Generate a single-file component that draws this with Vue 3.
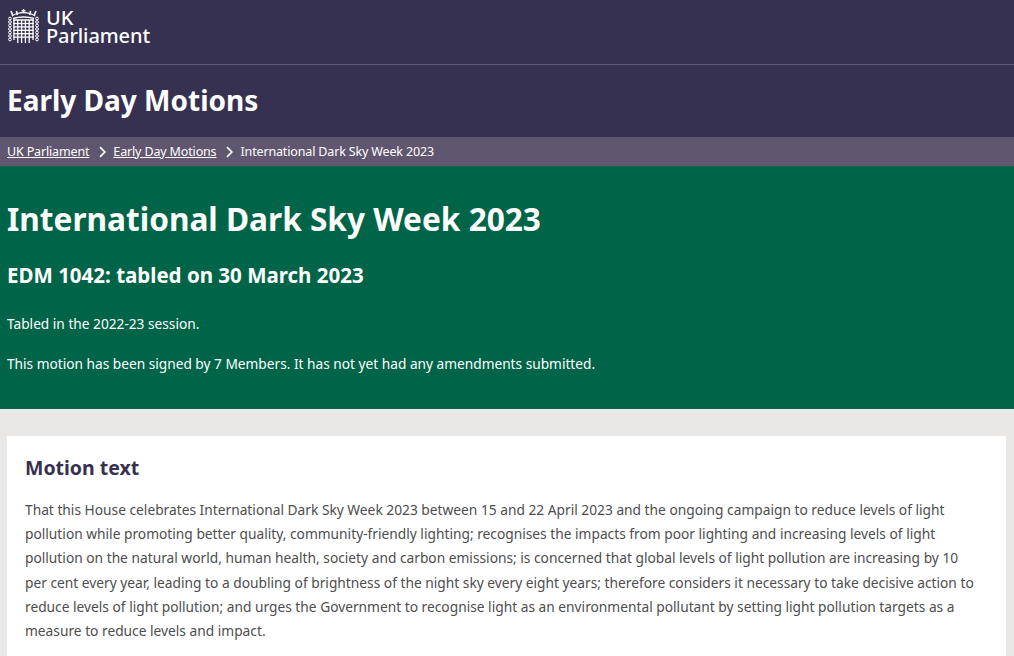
<script setup>
const crumbs = [
  { label: "UK Parliament", href: "#" },
  { label: "Early Day Motions", href: "#" }
];
const bars = [0, 1, 2, 3, 4, 5];
const rails = [0, 1, 2, 3, 4];
const links = [0, 1, 2, 3, 4, 5, 6];
</script>

<template>
  <div class="page">
    <header class="top">
      <div class="logo-row">
        <a class="logo" href="#">
          <svg class="portcullis" width="31" height="36" viewBox="0 0 31 36" fill="none" stroke="#fff">
            <!-- crown -->
            <path d="M15.5 0v4M13.5 1.8h4" stroke-width="1.5" />
            <path d="M3 2l1.6 4M8.5 2l.8 4M22.5 2l-.8 4M28 2l-1.6 4" stroke-width="1.6" />
            <path d="M4 7c3.5-2.6 7-3.4 11.5-3.4S23.500 4.400 27 7" stroke-width="1.3" />
            <path d="M5 9.500c3-1 6.500-1.500 10.500-1.500s7.500.5 10.500 1.500" stroke-width="1.4" />
            <!-- grid -->
            <path d="M5 11h21" stroke-width="1.5" />
            <path v-for="i in bars" :key="'b' + i" :d="`M${6 + i * 3.8} 11V${i === 0 || i === 5 ? 31 : 34}`" stroke-width="1.3" />
            <path v-for="i in rails" :key="'r' + i" :d="`M5 ${14.500 + i * 3.4}H26`" stroke-width="1.3" />
            <!-- chains -->
            <circle v-for="i in links" :key="'l' + i" cx="2" :cy="9.500 + i * 3.5" r="1.400" stroke-width="1" />
            <circle v-for="i in links" :key="'m' + i" cx="29" :cy="9.500 + i * 3.5" r="1.400" stroke-width="1" />
          </svg>
          <span class="logo-text">UK<br />Parliament</span>
        </a>
      </div>
      <div class="section-title">Early Day Motions</div>
    </header>

    <nav class="crumbs">
      <template v-for="c in crumbs" :key="c.label">
        <a :href="c.href">{{ c.label }}</a>
        <svg class="chev" width="7" height="12" viewBox="0 0 7 12" fill="none" stroke="#fff" stroke-width="1.7">
          <path d="M1 1.200L5.800 6 1 10.800" />
        </svg>
      </template>
      <span>International Dark Sky Week 2023</span>
    </nav>

    <section class="hero">
      <h1>International Dark Sky Week 2023</h1>
      <h2>EDM 1042: tabled on 30 March 2023</h2>
      <p>Tabled in the 2022-23 session.</p>
      <p>This motion has been signed by 7 Members. It has not yet had any amendments submitted.</p>
    </section>

    <main class="body">
      <article class="card">
        <h3>Motion text</h3>
        <p>That this House celebrates International Dark Sky Week 2023 between 15 and 22 April 2023 and the ongoing campaign to reduce levels of light pollution while promoting better quality, community-friendly lighting; recognises the impacts from poor lighting and increasing levels of light pollution on the natural world, human health, society and carbon emissions; is concerned that global levels of light pollution are increasing by 10 per cent every year, leading to a doubling of brightness of the night sky every eight years; therefore considers it necessary to take decisive action to reduce levels of light pollution; and urges the Government to recognise light as an environmental pollutant by setting light pollution targets as a measure to reduce levels and impact.</p>
      </article>
    </main>
  </div>
</template>

<style>
html, body {
  margin: 0;
  background: #e9e8e6;
}
</style>

<style scoped>
.page {
  font-family: "Noto Sans", sans-serif;
  height: 656px;
  overflow: hidden;
  background: #e9e8e6;
}
.top {
  background: #373151;
  color: #fff;
}
.logo-row {
  height: 65px;
  border-bottom: 1px solid #5f5873;
  box-sizing: border-box;
  padding: 9px 8px 0;
}
.logo {
  display: flex;
  gap: 7px;
  color: #fff;
  text-decoration: none;
}
.logo-text {
  font-family: "Noto Sans", sans-serif;
  font-size: 20px;
  font-weight: 500;
  line-height: 18px;
  letter-spacing: -0.1px;
}
.section-title {
  font-size: 28px;
  font-weight: 700;
  height: 72px;
  line-height: 71px;
  padding-left: 7px;
}
.crumbs {
  height: 29px;
  background: #615670;
  display: flex;
  align-items: center;
  padding-left: 7px;
  box-sizing: border-box;
  font-size: 12.500px;
  letter-spacing: -0.15px;
  color: #fff;
}
.crumbs a {
  color: #fff;
}
.chev {
  margin: 0 7px 0 10px;
}
.hero {
  background: #006548;
  color: #fff;
  height: 243px;
  box-sizing: border-box;
  padding: 33px 7px 0;
}
.hero h1 {
  font-size: 31.600px;
  line-height: 40px;
  margin: 0;
  font-weight: 700;
}
.hero h2 {
  font-size: 20.500px;
  line-height: 28px;
  margin: 22px 0 0;
  font-weight: 700;
}
.hero p {
  font-size: 13.700px;
  line-height: 20px;
  margin: 20px 0 0;
}
.hero h2 + p {
  margin-top: 25px;
}
.body {
  padding: 27px 8px 0 7px;
}
.card {
  background: #fff;
  padding: 18px 26px 0 18px;
  height: 400px;
}
.card h3 {
  font-size: 19.500px;
  line-height: 28px;
  margin: 0;
  color: #373151;
  font-weight: 700;
}
.card p {
  font-size: 13.750px;
  line-height: 24.200px;
  margin: 16px 0 0;
  color: #4d4d4d;
}
</style>
